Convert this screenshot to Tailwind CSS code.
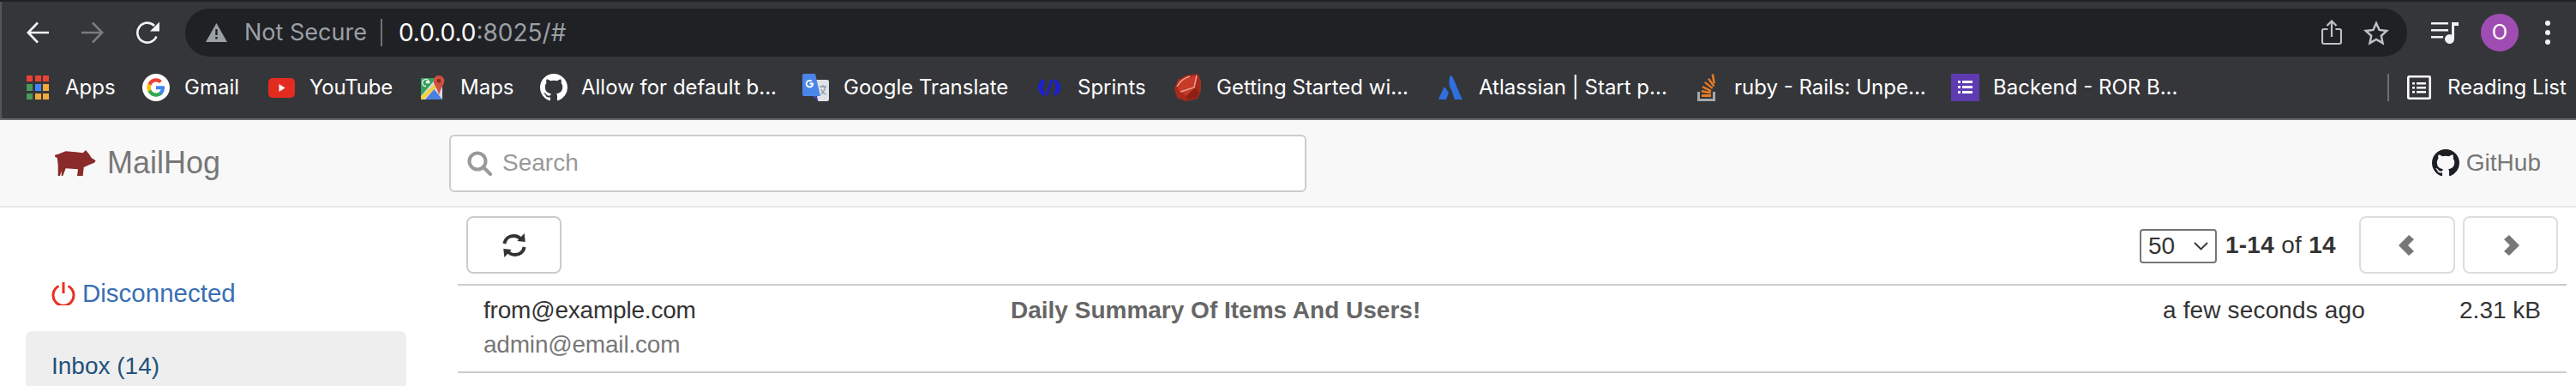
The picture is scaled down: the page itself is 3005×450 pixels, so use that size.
<!DOCTYPE html>
<html lang="en">

<head>
    <meta charset="UTF-8">
    <title>MailHog</title>
    <script src="https://cdn.jsdelivr.net/npm/@tailwindcss/browser@4"></script>
</head>

<body class="bg-white overflow-hidden">
    <div class="w-[3005px] h-[450px] overflow-hidden flex flex-col font-['Liberation_Sans',sans-serif]">

        <!-- browser chrome -->
        <div class="h-[2px] shrink-0 bg-[#202124]"></div>
        <div class="h-[68px] shrink-0 bg-[#35363a] flex items-center pl-[31px] pt-[4px] border-l-2 border-[#55565a] font-['Inter',sans-serif]">
            <svg class="w-[26px] h-[26px] -ml-[2px] mr-[38px]" viewBox="0 0 26 26" fill="none" stroke="#f1f3f4" stroke-width="2.6">
                <path d="M26 13H2M13 1.5L1.8 13 13 24.5" />
            </svg>
            <svg class="w-[26px] h-[26px] mr-[38px]" viewBox="0 0 26 26" fill="none" stroke="#7b7c7f" stroke-width="2.6">
                <path d="M0 13H24M13 1.5L24.2 13 13 24.5" />
            </svg>
            <svg class="w-[28px] h-[28px] mr-[29px]" viewBox="0 0 28 28" fill="none">
                <path d="M23.5 18.5A11.5 11.5 0 1 1 21 6" stroke="#f1f3f4" stroke-width="2.6" />
                <path d="M27 1.5V12.5H16z" fill="#f1f3f4" />
            </svg>
            <div class="w-[2592px] h-[56px] bg-[#202124] rounded-full flex items-center pl-[24px]">
                <svg class="w-[25px] h-[22px] mr-[20px]" viewBox="0 0 25 22">
                    <path d="M12.5 0L25 22H0z" fill="#9aa0a6" />
                    <path d="M11.3 7h2.4v7h-2.4zM11.3 16h2.4v2.6h-2.4z" fill="#202124" />
                </svg>
                <span class="text-[27px] text-[#9aa0a6]">Not Secure</span>
                <span class="w-[2px] h-[32px] bg-[#70757a] ml-[16px] mr-[19px]"></span>
                <span class="text-[28px] text-white">0.0.0.0<span class="text-[#9aa0a6]">:8025/#</span></span>
                <svg class="w-[24px] h-[30px] ml-auto mr-[25px]" viewBox="0 0 24 30" fill="none" stroke="#bdc1c6" stroke-width="2.2">
                    <path d="M7.5 11H3a2 2 0 0 0-2 2v13a2 2 0 0 0 2 2h18a2 2 0 0 0 2-2V13a2 2 0 0 0-2-2h-4.500M12 20V2M6.500 7L12 1.500 17.500 7" />
                </svg>
                <svg class="w-[30px] h-[29px] mr-[21px]" viewBox="0 0 30 29" fill="none" stroke="#bdc1c6" stroke-width="2.500">
                    <path d="M15 3l3.600 7.900 8.600 1-6.400 5.800 1.700 8.500-7.500-4.300-7.500 4.300 1.700-8.500-6.400-5.800 8.600-1z" />
                </svg>
            </div>
            <svg class="w-[32px] h-[26px] ml-[28px] mr-[26px]" viewBox="0 0 32 26" fill="#f1f3f4">
                <path d="M0 1h20v2.600H0zM0 9h20v2.600H0zM0 17h14v2.600H0z" />
                <path d="M24 1h8v4h-5v15.500a5.500 5.500 0 1 1-3-4.900z" />
            </svg>
            <div class="w-[44px] h-[44px] rounded-full bg-[#a04db3] text-white text-[24px] flex items-center justify-center">O</div>
            <div class="ml-[31px] flex flex-col gap-[5px]">
                <span class="w-[6px] h-[6px] rounded-full bg-[#f1f3f4]"></span>
                <span class="w-[6px] h-[6px] rounded-full bg-[#f1f3f4]"></span>
                <span class="w-[6px] h-[6px] rounded-full bg-[#f1f3f4]"></span>
            </div>
        </div>

        <!-- bookmarks -->
        <div class="h-[68px] shrink-0 bg-[#35363a] flex items-center pl-[31px] pb-[4px] border-l-2 border-[#55565a] text-[24px] text-white font-['Inter',sans-serif] whitespace-nowrap">
            <div class="w-[135px] -ml-[2px] flex items-center">
                <svg class="w-[26px] h-[28px] mr-[19px]" viewBox="0 0 26 28">
                    <path d="M0 0h7v7H0zM10 0h7v7h-7zM19 0h7v7h-7z" fill="#ea4335" />
                    <path d="M0 10h7v8H0zM0 21h7v7H0z" fill="#4a9a5a" />
                    <path d="M10 10h7v8h-7z" fill="#4285f4" />
                    <path d="M19 10h7v8h-7zM10 21h7v7h-7zM19 21h7v7h-7z" fill="#f2a93b" />
                </svg>
                <span>Apps</span>
            </div>
            <div class="w-[147px] flex items-center">
                <svg class="w-[32px] h-[32px] mr-[17px]" viewBox="0 0 48 48">
                    <circle cx="24" cy="24" r="24" fill="#fff" />
                    <path d="M39 24.500c0-1.200-.100-2.300-.300-3.300H24v6.300h8.400c-.400 2-1.500 3.700-3.100 4.800v4h5c3-2.700 4.700-6.800 4.700-11.800z" fill="#4285f4" />
                    <path d="M24 40c4.200 0 7.800-1.400 10.300-3.700l-5-4c-1.400 1-3.200 1.500-5.300 1.500-4.100 0-7.500-2.700-8.700-6.400h-5.200v4C12.600 36.500 17.900 40 24 40z" fill="#34a853" />
                    <path d="M15.300 27.400c-.300-1-.500-2.100-.500-3.400s.200-2.400.500-3.400v-4h-5.200C9 18.800 8 21.300 8 24s1 5.200 2.100 7.400z" fill="#fbbc05" />
                    <path d="M24 14.300c2.300 0 4.400.800 6 2.300l4.400-4.400C31.800 9.600 28.200 8 24 8c-6.100 0-11.400 3.500-13.900 8.600l5.200 4c1.200-3.600 4.600-6.300 8.700-6.300z" fill="#ea4335" />
                </svg>
                <span>Gmail</span>
            </div>
            <div class="w-[178px] flex items-center">
                <svg class="w-[31px] h-[23px] mr-[17px]" viewBox="0 0 31 23">
                    <rect width="31" height="23" rx="5" fill="#e32c1f" />
                    <path d="M12.500 7l7 4.500-7 4.500z" fill="#fff" />
                </svg>
                <span class="tracking-[-0.2px]">YouTube</span>
            </div>
            <div class="w-[139px] flex items-center">
                <svg class="w-[28px] h-[28px] mr-[18px]" viewBox="0 0 28 28">
                    <path d="M1 3h23a1 1 0 0 1 1 1v23a1 1 0 0 1-1 1H1a1 1 0 0 1-1-1V4a1 1 0 0 1 1-1z" fill="#d8dadc" />
                    <path d="M0 24V4a1 1 0 0 1 1-1h17L0 24z" fill="#34a15c" />
                    <path d="M0 24.500L15 11l3 3L3 28H0z" fill="#f4d03f" />
                    <path d="M5 28L15.500 16 25 28z" fill="#4a80e0" />
                    <path d="M6 12.500a4 4 0 1 1 3.500-5.500H6.500v1.500h4" fill="none" stroke="#e8f2ea" stroke-width="1.300" />
                    <path d="M21 0a6.300 6.300 0 0 1 6.300 6.300C27.300 11 23 14 21 23c-2-9-6.300-12-6.300-16.700A6.300 6.300 0 0 1 21 0z" fill="#cf5040" />
                    <circle cx="21" cy="6.300" r="2.300" fill="#7f2a20" />
                </svg>
                <span>Maps</span>
            </div>
            <div class="w-[306px] flex items-center">
                <svg class="w-[32px] h-[32px] mr-[16px]" viewBox="0 0 16 16" fill="#fff">
                    <path d="M8 0C3.580 0 0 3.580 0 8c0 3.540 2.290 6.530 5.470 7.590.400.070.550-.170.550-.380 0-.190-.010-.820-.010-1.490-2.010.370-2.530-.490-2.690-.940-.090-.230-.480-.940-.820-1.130-.280-.150-.680-.520-.010-.530.630-.010 1.080.580 1.230.820.720 1.210 1.870.870 2.330.660.070-.520.280-.870.510-1.070-1.780-.200-3.640-.890-3.640-3.950 0-.870.310-1.590.820-2.150-.080-.200-.360-1.020.080-2.120 0 0 .670-.210 2.200.820.640-.180 1.320-.270 2-.270.680 0 1.360.090 2 .270 1.530-1.040 2.200-.820 2.200-.820.440 1.100.160 1.920.080 2.120.510.560.820 1.270.820 2.150 0 3.070-1.870 3.750-3.650 3.950.290.250.540.730.540 1.480 0 1.070-.010 1.930-.010 2.200 0 .210.150.460.550.380A8.013 8.013 0 0016 8c0-4.420-3.580-8-8-8z" />
                </svg>
                <span>Allow for default b...</span>
            </div>
            <div class="w-[275px] flex items-center">
                <svg class="w-[31px] h-[32px] mr-[17px]" viewBox="0 0 31 32">
                    <path d="M14 7h15a2 2 0 0 1 2 2v21a2 2 0 0 1-2 2H18z" fill="#dfe3e6" />
                    <path d="M16 26h-4l7 6z" fill="#3b48c0" />
                    <path d="M2 0h13l6 26H2a2 2 0 0 1-2-2V2a2 2 0 0 1 2-2z" fill="#4a86e8" />
                    <path d="M13 10.500h-4.500v2h2.400a2.700 2.700 0 1 1-.800-3l1.400-1.400a4.700 4.700 0 1 0 1.500 2.400z" fill="#fff" />
                    <path d="M20 15h8M24 13v2M21.500 24c3-2 4.500-5 5-9M22 18c1 3 3 5 5.500 6" stroke="#8a9ba8" stroke-width="1.300" fill="none" />
                </svg>
                <span>Google Translate</span>
            </div>
            <div class="w-[159px] flex items-center">
                <svg class="w-[26px] h-[22px] mr-[20px]" viewBox="0 0 26 22" fill="#1a1fd6">
                    <path d="M6 1L8 4C5 7 5 15 8 18L6 21C-2 15-2 7 6 1zM20 1C28 7 28 15 20 21L18 18C21 15 21 7 18 4z" />
                    <path d="M14.500 2h3L11.500 20h-3z" />
                </svg>
                <span>Sprints</span>
            </div>
            <div class="w-[308px] flex items-center">
                <svg class="w-[32px] h-[32px] mr-[17px]" viewBox="0 0 32 32">
                    <path d="M4 7L13 2 27 0 31 8 31 19 27 29 13 32 3 28 0 17z" fill="#a82a1c" />
                    <path d="M5 9L15 4 26 2 24 16 14 26 4 18z" fill="#c63a28" />
                    <path d="M14 26L24 16 29 21 26 28 14 30z" fill="#8e1f14" />
                    <path d="M3 15C6 9 11 5 18 3M7 21L23 16 26 2" fill="none" stroke="#e8a493" stroke-width="1.500" />
                </svg>
                <span>Getting Started wi...</span>
            </div>
            <div class="w-[302px] flex items-center">
                <svg class="w-[28px] h-[28px] mr-[19px]" viewBox="0 0 28 28">
                    <path d="M14 0c3-1 8 16 14 28h-9c-2-5-3-10-5-13-2-3-2-12 0-15z" fill="#2f6fe0" />
                    <path d="M7 13c-2 4-5 10-7 15h9l3-8z" fill="#2f6fe0" />
                </svg>
                <span>Atlassian | Start p...</span>
            </div>
            <div class="w-[296px] flex items-center">
                <svg class="w-[21px] h-[32px] mr-[22px]" viewBox="0 0 21 32">
                    <path d="M0 21h3v8h15v-8h3v11H0z" fill="#a6a8ab" />
                    <path d="M5 24h11v3H5zM5 19l11 2-.500 2.500-11-2zM6.500 14l10 5-1 2.200-10-5zM9.500 9l9 7-1.500 1.800-9-7zM14 5l6.500 9-2 1.300L12 6.500zM19 0l2 11-2.500.400L16.500 1z" fill="#e87a24" />
                </svg>
                <span>ruby - Rails: Unpe...</span>
            </div>
            <div class="w-[509px] flex items-center">
                <svg class="w-[33px] h-[32px] mr-[16px]" viewBox="0 0 33 32">
                    <rect width="33" height="32" fill="#5e3bb0" />
                    <path d="M8 8h3v3H8zM13 8h12v3H13zM8 14h3v3H8zM13 14h12v3H13zM8 20h3v3H8zM13 20h12v3H13z" fill="#fff" />
                </svg>
                <span>Backend - ROR B...</span>
            </div>
            <span class="w-[2px] h-[32px] bg-[#6d6e71] mr-[21px]"></span>
            <svg class="w-[28px] h-[28px] mr-[19px]" viewBox="0 0 28 28" fill="none">
                <rect x="1.300" y="1.300" width="25.400" height="25.400" rx="1" stroke="#fff" stroke-width="2.600" />
                <path d="M6 8h3v2.400H6zM11 8h11v2.400H11zM6 13h3v2.400H6zM11 13h11v2.400H11zM6 18h3v2.400H6zM11 18h11v2.400H11z" fill="#fff" />
            </svg>
            <span>Reading List</span>
        </div>
        <div class="h-[2px] shrink-0 bg-[#6b6c6f]"></div>

        <!-- navbar -->
        <div class="h-[102px] shrink-0 bg-[#f8f8f8] border-b-2 border-[#e7e7e7] flex items-center pl-[64px] pr-[41px]">
            <svg class="w-[48px] h-[31px] mr-[13px]" viewBox="0 0 48 31" fill="#8a2a2a">
                <path d="M0 5.700L3.700 4.700 12.700 1.300 24.300 2.300 32.700 3.300 36 0 40 4.700 42.700 9 47.700 12.300 46 14.700 41 16.700 33.700 20 32.700 30H26L27 22.300 12.700 21.300 9.300 30H7.700V24L6 30H3.700V17L2.700 9 .3 8z" />
            </svg>
            <span class="text-[36px] text-[#777] w-[399px]">MailHog</span>
            <div class="w-[1000px] h-[67px] bg-white border-2 border-[#ccc] rounded-[6px] flex items-center pl-[19px]">
                <svg class="w-[29px] h-[29px] mr-[12px]" viewBox="0 0 29 29" fill="none" stroke="#999" stroke-width="4">
                    <circle cx="12" cy="12" r="9.500" />
                    <path d="M19 19l8 8" stroke-linecap="round" />
                </svg>
                <span class="text-[28px] text-[#999]">Search</span>
            </div>
            <svg class="w-[32px] h-[32px] ml-auto mr-[8px]" viewBox="0 0 16 16" fill="#1b1f23">
                <path d="M8 0C3.580 0 0 3.580 0 8c0 3.540 2.290 6.530 5.470 7.590.400.070.550-.170.550-.380 0-.190-.010-.820-.010-1.490-2.010.370-2.530-.490-2.690-.940-.090-.230-.480-.940-.820-1.130-.280-.150-.680-.520-.010-.530.630-.010 1.080.580 1.230.820.720 1.210 1.870.870 2.330.660.070-.520.280-.870.510-1.070-1.780-.200-3.640-.890-3.640-3.950 0-.870.310-1.590.820-2.150-.080-.200-.360-1.020.080-2.120 0 0 .670-.210 2.200.820.640-.180 1.320-.270 2-.270.680 0 1.360.090 2 .270 1.530-1.040 2.200-.820 2.200-.820.440 1.100.160 1.920.080 2.120.510.560.820 1.270.820 2.150 0 3.070-1.870 3.750-3.650 3.950.290.250.540.730.540 1.480 0 1.070-.010 1.930-.010 2.200 0 .210.150.460.550.380A8.013 8.013 0 0016 8c0-4.420-3.580-8-8-8z" />
            </svg>
            <span class="text-[28px] text-[#777]">GitHub</span>
        </div>

        <!-- main -->
        <div class="flex flex-1 min-h-0 text-[28px] text-[#333]">
            <div class="w-[534px] shrink-0 pl-[30px] pt-[84px]">
                <div class="flex items-center pl-[30px] h-[32px] text-[29.500px] text-[#3a6fb3]">
                    <svg class="w-[28px] h-[28px] mr-[8px]" viewBox="0 0 28 28" fill="none" stroke="#e8301f" stroke-width="3">
                        <path d="M8.500 5.500a12 12 0 1 0 11 0" />
                        <path d="M14 1v13" />
                    </svg>
                    <span>Disconnected</span>
                </div>
                <div class="w-[444px] h-[80px] mt-[28px] bg-[#eee] rounded-[8px] pl-[30px] pt-[21px] text-[#23527c] leading-[40px]">Inbox (14)</div>
            </div>

            <div class="flex-1 min-w-0">
                <div class="flex items-center pl-[10px] pr-[21px] pt-[10px]">
                    <div class="w-[111px] h-[67px] border-2 border-[#ccc] rounded-[8px] flex items-center justify-center">
                        <svg class="w-[28px] h-[28px]" viewBox="0 0 28 28" fill="none">
                            <path d="M2.300 12C3.500 6 8 3 13 3c4 0 7 1.500 9 4.500" stroke="#333" stroke-width="4" />
                            <path d="M25.700 0L26.700 10 17.300 9z" fill="#333" />
                            <path d="M25.700 16C24.500 22 20 25 15 25c-4 0-7-1.500-9-4.500" stroke="#333" stroke-width="4" />
                            <path d="M2.300 28L1.300 18 10.700 19z" fill="#333" />
                        </svg>
                    </div>
                    <div class="ml-auto w-[90px] h-[40px] border-2 border-[#767676] rounded-[4px] flex items-center pl-[8px] pr-[8px] mt-[2px] justify-between">
                        <span>50</span>
                        <svg class="w-[17px] h-[10px]" viewBox="0 0 17 10" fill="none" stroke="#333" stroke-width="1.800">
                            <path d="M1 1l7.500 7.500L16 1" />
                        </svg>
                    </div>
                    <span class="ml-[10px] mr-[27px] tracking-[0.3px]"><b>1-14</b> of <b>14</b></span>
                    <div class="w-[112px] h-[67px] border-2 border-[#ddd] rounded-[8px] flex items-center justify-center">
                        <svg class="w-[18px] h-[24px] -ml-[2px]" viewBox="0 0 18 24" fill="#777">
                            <path d="M12 0l6 5-7 7 7 7-6 5L0 12z" />
                        </svg>
                    </div>
                    <div class="ml-[9px] w-[111px] h-[67px] border-2 border-[#ddd] rounded-[8px] flex items-center justify-center">
                        <svg class="w-[18px] h-[24px] ml-[3px]" viewBox="0 0 18 24" fill="#777">
                            <path d="M6 0l-6 5 7 7-7 7 6 5 12-12z" />
                        </svg>
                    </div>
                </div>
                <div class="mt-[12px] mr-[11px] border-t-2 border-b-2 border-[#ccc] h-[104px] flex pl-[30px] pr-[30px] pt-[9px] leading-[40px] -mb-[4px]">
                    <div class="w-[615px] shrink-0 tracking-[-0.2px]">
                        <div>from@example.com</div>
                        <div class="text-[#777]">admin@email.com</div>
                    </div>
                    <div class="flex-1 font-bold text-[#666]">Daily Summary Of Items And Users!</div>
                    <div class="w-[345px] shrink-0 tracking-[0.15px]">a few seconds ago</div>
                    <div class="w-[96px] shrink-0 text-right">2.31 kB</div>
                </div>
            </div>
        </div>
    </div>
</body>

</html>
